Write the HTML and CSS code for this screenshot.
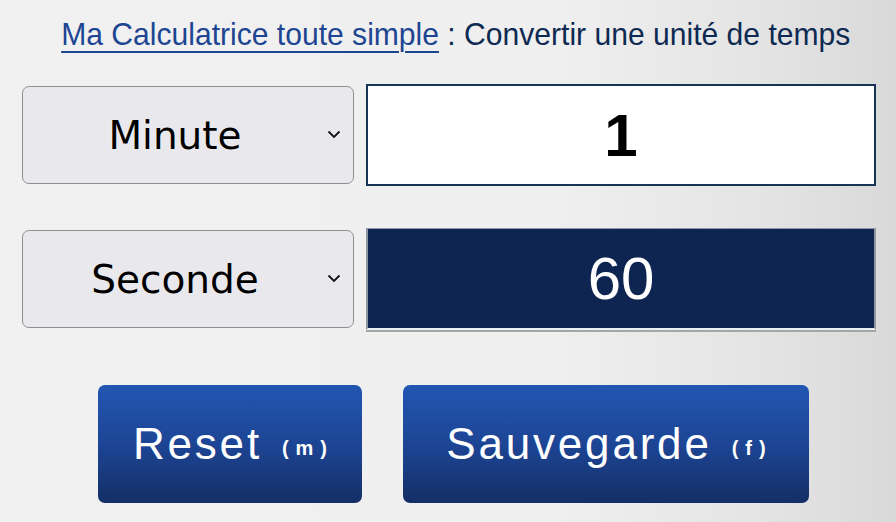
FILE: index.html
```html
<!DOCTYPE html>
<html lang="fr">
<head>
<meta charset="utf-8">
<title>Convertir une unité de temps</title>
<link rel="stylesheet" href="styles.css">
</head>
<body>
<main class="calc">
  <h1 class="title"><a class="title-link" href="#">Ma Calculatrice toute simple</a> : Convertir une unité de temps</h1>
  <div class="row">
    <div class="unit-wrap">
      <select class="unit"><option>Minute</option><option>Seconde</option><option>Heure</option></select>
      <svg class="chevron" width="14" height="9" viewBox="0 0 14 9"><path d="M1.5 1.5 L7 7 L12.5 1.5" fill="none" stroke="#111" stroke-width="1.8"/></svg>
    </div>
    <input class="value" type="text" value="1">
  </div>
  <div class="row">
    <div class="unit-wrap">
      <select class="unit"><option>Seconde</option><option>Minute</option><option>Heure</option></select>
      <svg class="chevron" width="14" height="9" viewBox="0 0 14 9"><path d="M1.5 1.5 L7 7 L12.5 1.5" fill="none" stroke="#111" stroke-width="1.8"/></svg>
    </div>
    <input class="value result" type="text" value="60" readonly>
  </div>
  <div class="actions">
    <button class="btn btn-reset">Reset<span class="key">(m)</span></button>
    <button class="btn btn-save">Sauvegarde<span class="key">(f)</span></button>
  </div>
</main>
</body>
</html>
```
FILE: styles.css
```css
html, body {
  margin: 0;
  padding: 0;
  height: 100%;
}
body {
  background: linear-gradient(to right, #f1f1f1 0%, #efefef 62%, #e4e4e4 85%, #d9d9d9 100%);
  font-family: "Liberation Sans", Arial, sans-serif;
}
.calc {
  width: 854px;
  padding: 14px 20px 0 22px;
}
.title {
  margin: 0;
  height: 68px;
  padding: 2px 0 0 10px;
  text-align: center;
  white-space: nowrap;
  font-family: "Liberation Sans", Arial, sans-serif;
  font-weight: normal;
  font-size: 32px;
  letter-spacing: 0;
  line-height: 36px;
  color: #0e2a52;
  transform: scaleX(0.94);
  transform-origin: 54% 50%;
}
.title-link {
  color: #1d4592;
  text-decoration: underline;
  text-decoration-thickness: 2px;
  text-underline-offset: 6px;
}
.row {
  display: flex;
  align-items: center;
  gap: 12px;
  margin-bottom: 42px;
}
.unit-wrap {
  position: relative;
  width: 332px;
  height: 98px;
}
.unit {
  appearance: none;
  -webkit-appearance: none;
  box-sizing: border-box;
  width: 100%;
  height: 100%;
  margin: 0;
  padding: 0 26px 0 0;
  border: 1.5px solid #8f8f95;
  border-radius: 7px;
  background: #e9e9ed;
  color: #000;
  font-family: "DejaVu Sans", Verdana, sans-serif;
  font-size: 39px;
  text-align: center;
  text-align-last: center;
}
.chevron {
  position: absolute;
  right: 13px;
  top: 44px;
  pointer-events: none;
}
.value {
  box-sizing: border-box;
  width: 510px;
  height: 102px;
  margin: 0;
  padding: 0;
  border: 2px solid #173456;
  background: #fff;
  color: #000;
  text-align: center;
  font-family: "Liberation Sans", Arial, sans-serif;
  font-weight: bold;
  font-size: 60px;
}
.value.result {
  background: #0d2550;
  color: #fff;
  font-weight: normal;
  border: 2px solid #8e98a4;
  border-top: 1px solid #8e98a4;
  border-bottom: 2px solid #e9f1f5;
  box-shadow: 0 2px 0 #a5a5a5;
}
.actions {
  display: flex;
  gap: 41px;
  margin-top: 55px;
  padding-left: 76px;
}
.btn {
  height: 118px;
  border: none;
  border-radius: 7px;
  background: linear-gradient(to bottom, #2256b2 0%, #1d4595 50%, #142f66 100%);
  color: #fff;
  font-family: "Liberation Sans", Arial, sans-serif;
  font-size: 44px;
  letter-spacing: 2.8px;
  padding: 0;
  display: flex;
  align-items: center;
  justify-content: center;
}
.btn-reset {
  width: 264px;
}
.btn-save {
  width: 406px;
}
.key {
  font-size: 20px;
  font-weight: bold;
  letter-spacing: 7px;
  margin-left: 20px;
  margin-right: -7px;
  position: relative;
  top: 4px;
}
```
